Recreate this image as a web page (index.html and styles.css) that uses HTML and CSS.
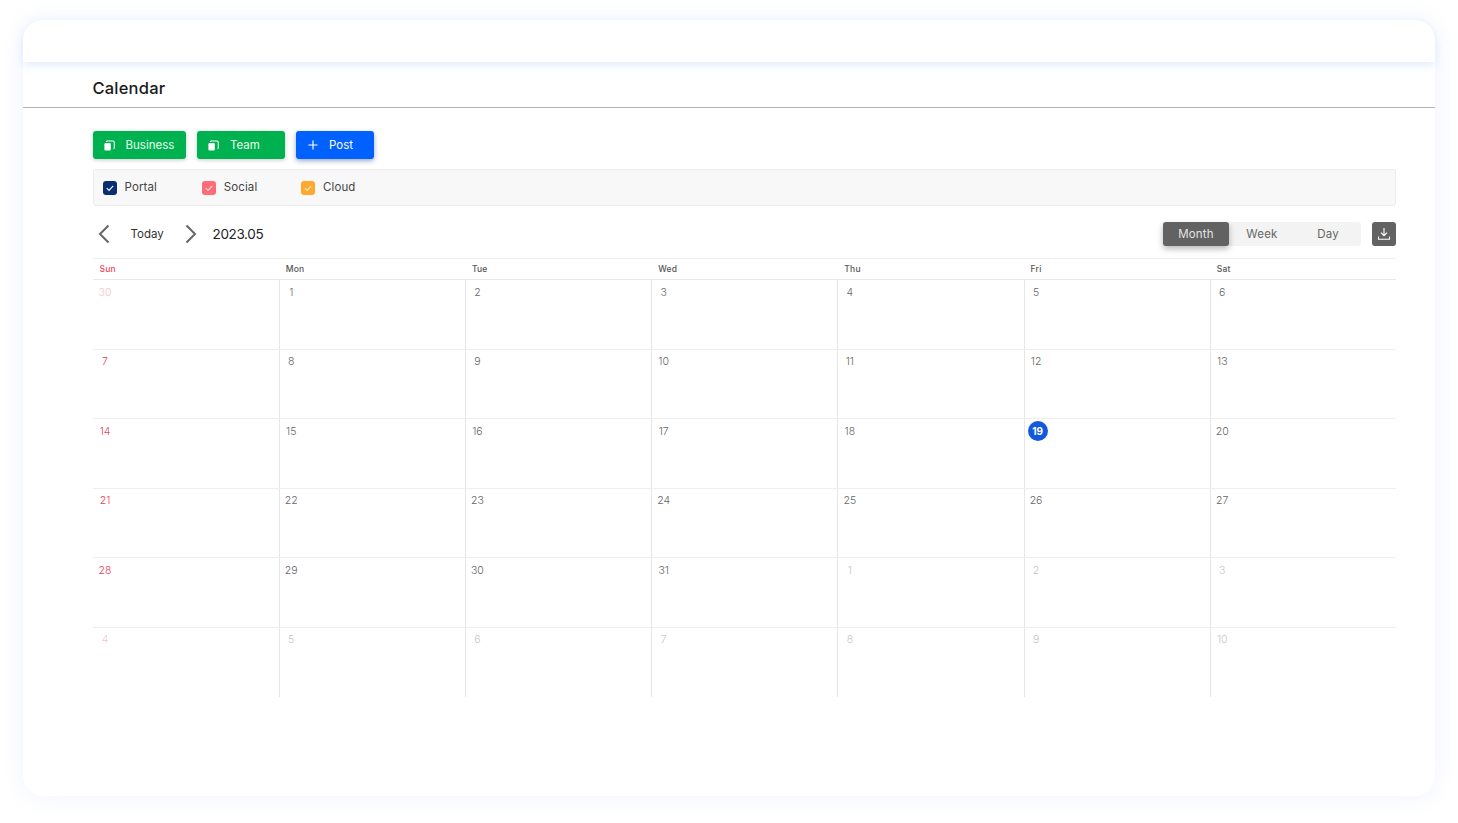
FILE: index.html
```html
<!DOCTYPE html>
<html lang="en">
<head>
<meta charset="utf-8">
<title>Calendar</title>
<link rel="stylesheet" href="styles.css">
</head>
<body>
<div class="card">
  <div class="topbar"></div>
  <div class="title-row"><h1>Calendar</h1></div>
  <div class="content">
    <div class="actions">
      <button class="btn green w-business"><svg class="ico" viewBox="0 0 11 11"><path d="M.4 3.900c0-.5.4-.9.9-.9h4.600c.5 0 .9.4.9.9v5.700c0 .5-.4.9-.9.900H1.300c-.5 0-.9-.4-.9-.9z" fill="#fff"/><path d="M2.400 1.900c0-.5.4-.9.9-.9h5.400c1 0 1.600.6 1.600 1.600v5.200c0 .5-.3.8-.8.8" fill="none" stroke="#fff" stroke-width="1.100"/></svg><span>Business</span></button>
      <button class="btn green w-team"><svg class="ico" viewBox="0 0 11 11"><path d="M.4 3.900c0-.5.4-.9.9-.9h4.600c.5 0 .9.4.9.9v5.700c0 .5-.4.9-.9.900H1.300c-.5 0-.9-.4-.9-.9z" fill="#fff"/><path d="M2.400 1.900c0-.5.4-.9.9-.9h5.400c1 0 1.600.6 1.600 1.600v5.200c0 .5-.3.8-.8.8" fill="none" stroke="#fff" stroke-width="1.100"/></svg><span>Team</span></button>
      <button class="btn blue w-post"><svg class="ico plus" viewBox="0 0 11 11"><path d="M5.500.5v10M.5 5.500h10" stroke="#fff" stroke-width="1.300" fill="none"/></svg><span>Post</span></button>
    </div>
    <div class="filters">
      <label class="filter"><span class="check navy"><svg viewBox="0 0 14 14"><path d="M3.800 7.200l2.200 2.200 4.200-4.600" fill="none" stroke="#fff" stroke-width="1.100"/></svg></span>Portal</label>
      <label class="filter"><span class="check red"><svg viewBox="0 0 14 14"><path d="M3.800 7.200l2.200 2.200 4.200-4.600" fill="none" stroke="#fff" stroke-width="1.100" opacity=".75"/></svg></span>Social</label>
      <label class="filter"><span class="check amber"><svg viewBox="0 0 14 14"><path d="M3.800 7.200l2.200 2.200 4.200-4.600" fill="none" stroke="#fff" stroke-width="1.100" opacity=".75"/></svg></span>Cloud</label>
    </div>
    <div class="toolbar">
      <svg class="chev" viewBox="0 0 12 20"><path d="M10.500 1.500L2 10l8.500 8.500" fill="none" stroke="#666" stroke-width="2"/></svg>
      <span class="today">Today</span>
      <svg class="chev next" viewBox="0 0 12 20"><path d="M1.500 1.500L10 10l-8.500 8.500" fill="none" stroke="#666" stroke-width="2"/></svg>
      <span class="period">2023.05</span>
      <div class="views">
        <span class="view active">Month</span>
        <span class="view">Week</span>
        <span class="view">Day</span>
      </div>
      <button class="download"><svg viewBox="0 0 14 14"><path d="M7 1v7.500M4 5.600l3 3 3-3" fill="none" stroke="#fff" stroke-width="1.100"/><path d="M1.500 9.500v2.800h11V9.500" fill="none" stroke="#fff" stroke-width="1.100"/></svg></button>
    </div>
    <div class="calendar">
      <div class="weekdays">
        <div class="wd sun">Sun</div><div class="wd">Mon</div><div class="wd">Tue</div><div class="wd">Wed</div><div class="wd">Thu</div><div class="wd">Fri</div><div class="wd">Sat</div>
      </div>
      <div class="week">
        <div class="day sun dim"><span class="num">30</span></div><div class="day"><span class="num">1</span></div><div class="day"><span class="num">2</span></div><div class="day"><span class="num">3</span></div><div class="day"><span class="num">4</span></div><div class="day"><span class="num">5</span></div><div class="day"><span class="num">6</span></div>
      </div>
      <div class="week">
        <div class="day sun"><span class="num">7</span></div><div class="day"><span class="num">8</span></div><div class="day"><span class="num">9</span></div><div class="day"><span class="num">10</span></div><div class="day"><span class="num">11</span></div><div class="day"><span class="num">12</span></div><div class="day"><span class="num">13</span></div>
      </div>
      <div class="week">
        <div class="day sun"><span class="num">14</span></div><div class="day"><span class="num">15</span></div><div class="day"><span class="num">16</span></div><div class="day"><span class="num">17</span></div><div class="day"><span class="num">18</span></div><div class="day"><span class="now">19</span></div><div class="day"><span class="num">20</span></div>
      </div>
      <div class="week">
        <div class="day sun"><span class="num">21</span></div><div class="day"><span class="num">22</span></div><div class="day"><span class="num">23</span></div><div class="day"><span class="num">24</span></div><div class="day"><span class="num">25</span></div><div class="day"><span class="num">26</span></div><div class="day"><span class="num">27</span></div>
      </div>
      <div class="week">
        <div class="day sun"><span class="num">28</span></div><div class="day"><span class="num">29</span></div><div class="day"><span class="num">30</span></div><div class="day"><span class="num">31</span></div><div class="day dim"><span class="num">1</span></div><div class="day dim"><span class="num">2</span></div><div class="day dim"><span class="num">3</span></div>
      </div>
      <div class="week last">
        <div class="day sun dim"><span class="num">4</span></div><div class="day dim"><span class="num">5</span></div><div class="day dim"><span class="num">6</span></div><div class="day dim"><span class="num">7</span></div><div class="day dim"><span class="num">8</span></div><div class="day dim"><span class="num">9</span></div><div class="day dim"><span class="num">10</span></div>
      </div>
    </div>
  </div>
</div>
</body>
</html>
```
FILE: styles.css
```css
* { box-sizing: border-box; }
html, body { margin: 0; height: 100%; }
body {
  background: #fff;
  padding: 20px 23px 27px;
  font-family: Inter, "Open Sans", "Liberation Sans", sans-serif;
  color: #333;
  overflow: hidden;
}
.card {
  height: 776px;
  background: #fff;
  border-radius: 20px;
  box-shadow: 0 0 24px rgba(190, 205, 255, .22);
}
.topbar {
  height: 42px;
  border-radius: 20px 20px 0 0;
  box-shadow: 0 3px 10px rgba(170, 200, 250, .35);
}
.title-row {
  height: 46px;
  padding-left: 69.500px;
  display: flex;
  align-items: center;
  border-bottom: 1px solid #b4b4b4;
}
h1 {
  margin: 6px 0 0;
  font-size: 16.500px;
  font-weight: 500;
  color: #1a1a1a;
  letter-spacing: .2px;
}
.content { padding: 23px 39px 0 69.500px; }
.actions { display: flex; gap: 11px; }
.btn {
  height: 28px;
  border: 0;
  border-radius: 3px;
  color: #eafff2;
  font: 400 11.500px Inter, "Open Sans", sans-serif;
  display: flex;
  align-items: center;
  padding: 0 0 0 11px;
  gap: 11px;
  box-shadow: 0 1px 4px rgba(0, 0, 0, .22);
}
.green { background: #00b14f; }
.blue { background: #0061fe; color: #fff; box-shadow: 0 2px 5px rgba(0, 40, 120, .4); }
.w-business { width: 93.500px; }
.w-team { width: 88px; }
.w-post { width: 78px; padding-left: 12px; }
.ico { width: 11px; height: 11px; flex: none; }
.plus { width: 10px; height: 10px; }
.filters {
  margin-top: 10px;
  height: 37px;
  background: #f8f8f8;
  border: 1px solid #ececec;
  border-radius: 3px;
  display: flex;
  align-items: center;
  padding: 0 0 2px 9px;
}
.filter {
  width: 99.300px;
  display: flex;
  align-items: center;
  gap: 8px;
  font-size: 11.500px;
  color: #444;
  letter-spacing: .1px;
}
.check {
  width: 14px;
  height: 14px;
  margin-top: 2px;
  border-radius: 3px;
  display: block;
}
.check svg { display: block; width: 14px; height: 14px; }
.navy { background: #0a2e70; }
.red { background: #ff6b76; }
.amber { background: #ffa82e; }
.toolbar {
  margin-top: 16px;
  height: 24px;
  display: flex;
  align-items: center;
  padding-left: 5px;
}
.chev { width: 12px; height: 20px; flex: none; }
.today { margin-left: 21px; font-size: 11.500px; color: #333; width: 33px; }
.chev.next { margin-left: 21px; }
.period { margin-left: 16px; font-size: 13.500px; font-weight: 400; color: #222; letter-spacing: -.35px; }
.views {
  margin-left: auto;
  display: flex;
  width: 198px;
  height: 24px;
  background: #f3f3f3;
  border-radius: 3px;
}
.view {
  width: 66px;
  display: flex;
  align-items: center;
  justify-content: center;
  font-size: 11.500px;
  color: #666;
  letter-spacing: .2px;
}
.view.active {
  background: #626262;
  color: #e4e4e4;
  border-radius: 3px;
  box-shadow: 0 3px 6px rgba(0, 0, 0, .28);
}
.download {
  margin-left: 11px;
  width: 24px;
  height: 24px;
  border: 0;
  padding: 5px;
  border-radius: 3px;
  background: #626262;
}
.download svg { display: block; width: 14px; height: 14px; }
.calendar { margin-top: 12px; }
.weekdays {
  display: grid;
  grid-template-columns: repeat(7, 1fr);
  height: 22px;
  border-top: 1px solid #eee;
  border-bottom: 1px solid #e8e8e8;
}
.wd {
  padding: 5px 0 0 7px;
  font-size: 8.500px;
  font-weight: 500;
  color: #555;
  letter-spacing: .2px;
}
.wd.sun { color: #f04358; }
.week {
  display: grid;
  grid-template-columns: repeat(7, 1fr);
  height: 69.500px;
  border-bottom: 1px solid #eee;
}
.week.last { border-bottom: 0; height: 69px; }
.day {
  padding-top: 5.500px;
  font-size: 10.500px;
  color: #666;
  border-left: 1px solid #e6e6e6;
  font-weight: 300;
}
.day:first-child { border-left-color: transparent; }
.day.sun { color: #e8405a; }
.day.dim { color: #c6c6c6; }
.day.sun.dim { color: #f8c4cc; }
.num {
  display: block;
  width: 23px;
  text-align: center;
}
.now {
  display: flex;
  align-items: center;
  justify-content: center;
  width: 20px;
  height: 20px;
  margin: -4px 0 0 3px;
  border-radius: 50%;
  background: #1259dc;
  color: #fff;
  font-weight: 700;
  font-size: 10px;
}
```
